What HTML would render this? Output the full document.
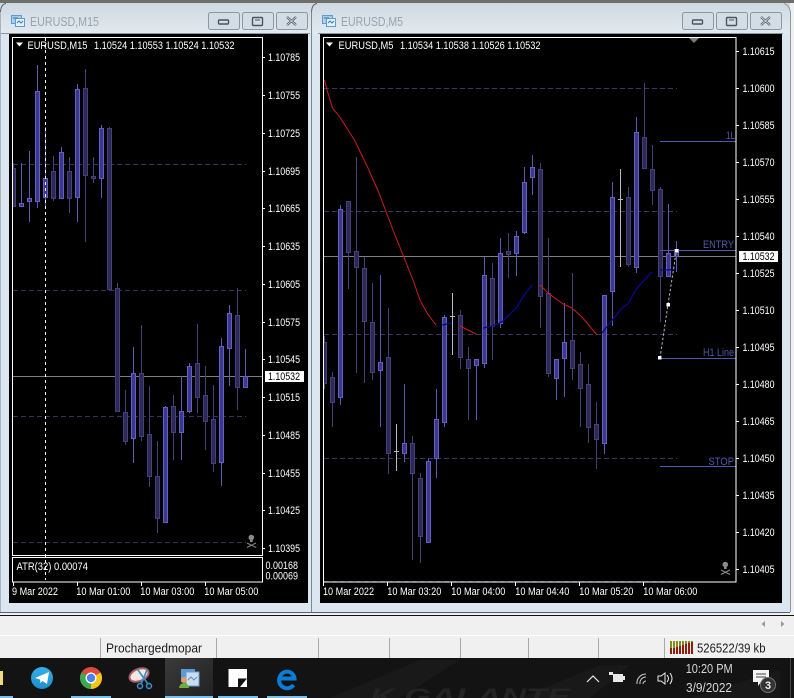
<!DOCTYPE html>
<html><head><meta charset="utf-8"><title>EURUSD</title>
<style>
html,body{margin:0;padding:0;background:#f0f0f0}
svg{display:block}
text{font-family:"Liberation Sans",sans-serif;font-size:10.8px;fill:#fff}
.t{font-size:13px;fill:#98a3ad}
.l{fill:#4f58a8;font-size:11px}
.s{font-size:13px;fill:#1c1c1c}
.c{font-size:13px;fill:#d8d8d8}
.g{stroke:#39345f;stroke-width:1;stroke-dasharray:5 3;fill:none}
.bw{stroke:#5f58b5;stroke-width:1;fill:none}
.bb{fill:#3b3690;stroke:#6660bd;stroke-width:1}
.dw{stroke:#45416e;stroke-width:1;fill:none}
.db{fill:#2c2958;stroke:#45407a;stroke-width:1}
.dj{stroke:#bdbac8;stroke-width:1;fill:none}
.w{stroke:#fff;stroke-width:1;fill:none}
.btn{fill:#d3dde6;stroke:#8b98a4;stroke-width:1}
.ic{fill:none;stroke:#4a5560;stroke-width:1.4}
</style></head>
<body>
<svg width="794" height="698" viewBox="0 0 794 698" xmlns="http://www.w3.org/2000/svg">
<defs>
<linearGradient id="tb" x1="0" y1="0" x2="0" y2="1"><stop offset="0" stop-color="#cfd9e2"/><stop offset="1" stop-color="#e2eaf0"/></linearGradient>
<linearGradient id="tg" x1="0" y1="0" x2="0" y2="1"><stop offset="0" stop-color="#35aee6"/><stop offset="1" stop-color="#1d8fca"/></linearGradient>
<linearGradient id="hl" x1="0" y1="0" x2="1" y2="1"><stop offset="0" stop-color="#3a3a3a"/><stop offset="1" stop-color="#222"/></linearGradient>
<clipPath id="lc"><rect x="13" y="38" width="249" height="517"/></clipPath>
<clipPath id="rc"><rect x="324" y="38" width="412" height="544"/></clipPath>
</defs>

<!-- frame background -->
<rect width="794" height="698" fill="#f0f0f0"/>
<rect x="0" y="0" width="794" height="3" fill="#6e6e6e"/>
<rect x="0" y="3" width="794" height="611" fill="#dbe6f0"/>
<rect x="0" y="3" width="311" height="31" fill="url(#tb)"/>
<rect x="311" y="3" width="479" height="31" fill="url(#tb)"/>
<rect x="790" y="3" width="4" height="611" fill="#f0f0f0"/>
<path d="M0.5 12Q1 4 6 3.5M311.5 12Q312 4 317 3.5" fill="none" stroke="#59636c"/>
<path d="M784 3.5Q789 5 790.5 12V612" fill="none" stroke="#8f9aa3"/>
<path d="M0 33.5H310M318 33.5H783" stroke="#8c969f"/>
<path d="M311.5 12V612" stroke="#7b868f"/>
<path d="M0.5 12V612" stroke="#a9b4bd"/>
<path d="M0 612.5H790" stroke="#55606a"/>
<rect x="0" y="613" width="794" height="1" fill="#f0f0f0"/>
<rect x="0" y="615" width="794" height="1" fill="#111"/>

<!-- left title -->
<g>
<rect x="11.5" y="15.5" width="10" height="8" fill="#a9cdec" stroke="#5f9bcf"/>
<rect x="15.5" y="18.5" width="9" height="8" fill="#e4f0fa" stroke="#5f9bcf"/>
<path d="M13 18h5M17 23l2-2 2 2 2-2" stroke="#3f78aa" fill="none"/>
<text class="t" x="30" y="26" textLength="69" lengthAdjust="spacingAndGlyphs">EURUSD,M15</text>
<rect class="btn" x="208.5" y="12.5" width="31" height="17" rx="2"/>
<rect class="btn" x="242.5" y="12.5" width="31" height="17" rx="2"/>
<rect class="btn" x="276.5" y="12.5" width="31" height="17" rx="2"/>
<rect class="ic" x="218.5" y="20" width="10" height="4" rx="1"/>
<rect class="ic" x="252.5" y="17.5" width="10" height="8" rx="1"/>
<path d="M255 20h5" stroke="#4a5560"/>
<path d="M287 17l9 8M296 17l-9 8" stroke="#4a5560" stroke-width="2.2" fill="none"/>
<path d="M287 17l9 8M296 17l-9 8" stroke="#eef2f5" stroke-width=".7" fill="none"/>
</g>
<!-- right title -->
<g>
<rect x="322.5" y="15.5" width="10" height="8" fill="#a9cdec" stroke="#5f9bcf"/>
<rect x="326.5" y="18.5" width="9" height="8" fill="#e4f0fa" stroke="#5f9bcf"/>
<path d="M324 18h5M328 23l2-2 2 2 2-2" stroke="#3f78aa" fill="none"/>
<text class="t" x="341" y="26" textLength="62" lengthAdjust="spacingAndGlyphs">EURUSD,M5</text>
<rect class="btn" x="682.5" y="12.5" width="31" height="17" rx="2"/>
<rect class="btn" x="716.5" y="12.5" width="31" height="17" rx="2"/>
<rect class="btn" x="750.5" y="12.5" width="31" height="17" rx="2"/>
<rect class="ic" x="692.5" y="20" width="10" height="4" rx="1"/>
<rect class="ic" x="726.5" y="17.5" width="10" height="8" rx="1"/>
<path d="M729 20h5" stroke="#4a5560"/>
<path d="M761 17l9 8M770 17l-9 8" stroke="#4a5560" stroke-width="2.2" fill="none"/>
<path d="M761 17l9 8M770 17l-9 8" stroke="#eef2f5" stroke-width=".7" fill="none"/>
</g>

<!-- charts bg -->
<rect x="9" y="34" width="299" height="569" fill="#000"/>
<rect x="320" y="34" width="462" height="569" fill="#000"/>

<!-- LEFT CHART -->
<g clip-path="url(#lc)">
<path class="g" d="M13 164.5H246M13 290.5H246M13 416.5H246M13 542.5H246"/>
<path d="M13 376.5H262" stroke="#7f7f7f"/>
<path class="dw" d="M13.5 163V207M53.5 156V201M69.5 157V213M85.5 69V242M93.5 157V183M109.5 127V290M117.5 283V412M125.5 390V445M141.5 325V441M149.5 386V487M157.5 441V533M173.5 395V460M197.5 324V413M205.5 366V450M213.5 385V472M237.5 288V410"/>
<path class="db" d="M11.5 168.5h4v38h-4zM51.5 171.5h4v27h-4zM67.5 171.5h4v27h-4zM83.5 88.5h4v87h-4zM91.5 176.5h4v2h-4zM107.5 128.5h4v161h-4zM115.5 288.5h4v123h-4zM123.5 412.5h4v29h-4zM139.5 373.5h4v63h-4zM147.5 434.5h4v42h-4zM155.5 476.5h4v42h-4zM171.5 406.5h4v26h-4zM195.5 363.5h4v34h-4zM203.5 395.5h4v26h-4zM211.5 419.5h4v44h-4zM235.5 315.5h4v72h-4z"/>
<path class="bw" d="M21.5 163V207M29.5 151V222M37.5 65V208M45.5 127V209M61.5 147V198M77.5 84V222M101.5 125V198M133.5 347V463M165.5 406V523M181.5 376V460M189.5 363V413M221.5 338V486M229.5 305V386M245.5 349V387"/>
<path class="bb" d="M19.5 203.5h4v3h-4zM27.5 198.5h4v3h-4zM35.5 91.5h4v110h-4zM43.5 178.5h4v19h-4zM59.5 152.5h4v46h-4zM75.5 89.5h4v108h-4zM99.5 128.5h4v50h-4zM131.5 373.5h4v65h-4zM163.5 407.5h4v115h-4zM179.5 411.5h4v21h-4zM187.5 366.5h4v45h-4zM219.5 346.5h4v116h-4zM227.5 313.5h4v35h-4zM243.5 376.5h4v11h-4z"/>
</g>
<path d="M45.5 38V580" stroke="#fff" stroke-dasharray="3 3"/>
<rect class="w" x="12.5" y="37.5" width="250" height="518"/>
<rect class="w" x="12.5" y="557.5" width="250" height="24.5"/>
<path d="M16 42.5h7l-3.500 4z" fill="#fff"/>
<text x="27.500" y="49" textLength="60" lengthAdjust="spacingAndGlyphs">EURUSD,M15</text>
<text x="94" y="49" textLength="140.500" lengthAdjust="spacingAndGlyphs">1.10524 1.10553 1.10524 1.10532</text>
<path class="w" d="M262 57.500h3M262 95.500h3M262 133.500h3M262 171.500h3M262 208.500h3M262 246.500h3M262 284.500h3M262 322.500h3M262 359.500h3M262 397.500h3M262 435.500h3M262 473.500h3M262 510.500h3M262 548.500h3"/>
<g>
<text x="268" y="61" textLength="32" lengthAdjust="spacingAndGlyphs">1.10785</text>
<text x="268" y="99" textLength="32" lengthAdjust="spacingAndGlyphs">1.10755</text>
<text x="268" y="137" textLength="32" lengthAdjust="spacingAndGlyphs">1.10725</text>
<text x="268" y="175" textLength="32" lengthAdjust="spacingAndGlyphs">1.10695</text>
<text x="268" y="212" textLength="32" lengthAdjust="spacingAndGlyphs">1.10665</text>
<text x="268" y="250" textLength="32" lengthAdjust="spacingAndGlyphs">1.10635</text>
<text x="268" y="288" textLength="32" lengthAdjust="spacingAndGlyphs">1.10605</text>
<text x="268" y="326" textLength="32" lengthAdjust="spacingAndGlyphs">1.10575</text>
<text x="268" y="363" textLength="32" lengthAdjust="spacingAndGlyphs">1.10545</text>
<text x="268" y="401" textLength="32" lengthAdjust="spacingAndGlyphs">1.10515</text>
<text x="268" y="439" textLength="32" lengthAdjust="spacingAndGlyphs">1.10485</text>
<text x="268" y="477" textLength="32" lengthAdjust="spacingAndGlyphs">1.10455</text>
<text x="268" y="514" textLength="32" lengthAdjust="spacingAndGlyphs">1.10425</text>
<text x="268" y="552" textLength="32" lengthAdjust="spacingAndGlyphs">1.10395</text>
</g>
<rect x="265" y="371" width="39" height="11" fill="#fff"/>
<text x="268" y="380" textLength="32" lengthAdjust="spacingAndGlyphs" style="fill:#000">1.10532</text>
<text x="16.500" y="570" textLength="71.500" lengthAdjust="spacingAndGlyphs">ATR(32) 0.00074</text>
<text x="265.500" y="569" textLength="32.500" lengthAdjust="spacingAndGlyphs">0.00168</text>
<text x="265.500" y="579.500" textLength="32.500" lengthAdjust="spacingAndGlyphs">0.00069</text>
<path class="w" d="M13.500 582v4M77.500 582v4M141.500 582v4M205.500 582v4"/>
<text x="12" y="595" textLength="46" lengthAdjust="spacingAndGlyphs">9 Mar 2022</text>
<text x="76.300" y="595" textLength="54" lengthAdjust="spacingAndGlyphs">10 Mar 01:00</text>
<text x="140.300" y="595" textLength="54" lengthAdjust="spacingAndGlyphs">10 Mar 03:00</text>
<text x="204.300" y="595" textLength="54" lengthAdjust="spacingAndGlyphs">10 Mar 05:00</text>
<!-- skull left -->
<g fill="#8a8a8a" stroke="#8a8a8a">
<circle cx="251.300" cy="537.500" r="2.800" stroke="none"/>
<rect x="250" y="539" width="2.600" height="3" stroke="none"/>
<path d="M247 543l9 4.500M256 543l-9 4.500" fill="none"/>
</g>

<!-- RIGHT CHART -->
<g clip-path="url(#rc)">
<path class="g" d="M324 88.500H677M324 211.500H677M324 334.500H677M324 458.500H677M324 581.500H677"/>
<path d="M324 256.500H736" stroke="#7f7f7f"/>
<path class="dw" d="M324.500 336V389M332.500 372V427M348.500 201V289M356.500 157V373M364.500 257V383M372.500 283V380M388.500 308V474M412.500 436V560M420.500 473V563M460.500 310V369M468.500 347V420M492.500 263V360M508.500 233V278M540.500 163V328M548.500 238V377M572.500 273V380M580.500 352V427M588.500 364V443M596.500 402V469M628.500 187V267M644.500 83V168M652.500 145V205M660.500 187V322"/>
<path class="db" d="M322.500 342.500h4v41h-4zM330.500 377.500h4v25h-4zM346.500 201.500h4v51h-4zM354.500 251.500h4v16h-4zM362.500 268.500h4v53h-4zM370.500 322.500h4v50h-4zM386.500 357.500h4v96h-4zM410.500 443.500h4v30h-4zM418.500 478.500h4v58h-4zM458.500 315.500h4v42h-4zM466.500 359.500h4v9h-4zM490.500 278.500h4v48h-4zM506.500 251.500h4v3h-4zM538.500 169.500h4v127h-4zM546.500 293.500h4v80h-4zM570.500 340.500h4v28h-4zM578.500 364.500h4v24h-4zM586.500 384.500h4v43h-4zM594.500 424.500h4v15h-4zM626.500 197.500h4v67h-4zM642.500 137.500h4v31h-4zM650.500 169.500h4v21h-4zM658.500 189.500h4v87h-4z"/>
<path class="bw" d="M340.500 205V405M380.500 275V427M404.500 384V462M428.500 458V543M436.500 389V478M444.500 315V427M476.500 359V420M484.500 257V368M500.500 238V328M516.500 231V276M524.500 167V234M532.500 155V195M556.500 359V400M564.500 303V397M604.500 295V454M612.500 182V326M636.500 117V273M668.500 204V276M676.500 241V272"/>
<path class="bb" d="M338.500 209.500h4v188h-4zM378.500 362.500h4v8h-4zM402.500 443.500h4v10h-4zM426.500 461.500h4v81h-4zM434.500 419.500h4v39h-4zM442.500 317.500h4v105h-4zM474.500 359.500h4v6h-4zM482.500 275.500h4v88h-4zM498.500 253.500h4v70h-4zM514.500 236.500h4v17h-4zM522.500 182.500h4v50h-4zM530.500 167.500h4v10h-4zM554.500 359.500h4v19h-4zM562.500 342.500h4v16h-4zM602.500 295.500h4v148h-4zM610.500 197.500h4v94h-4zM634.500 132.500h4v135h-4zM666.500 253.500h4v23h-4zM674.500 249.500h4v7h-4z"/>
<path class="dj" d="M396.500 424V471M394 451.500h5M452.500 293V355M450 316.500h5M620.500 169V267M618 199.500h5"/>
<!-- MA -->
<path d="M324.500 80L327 90L332.500 108L340.500 118L355 141L368 168L379 193L393 230L403 255L413 280L420 300L427 313L436 325M460 326L476 334M540 285L548 293L563 304L572 308L582 317L597 335" fill="none" stroke="#cc1c1c" stroke-width="1"/>
<path d="M442 325L452 323M483 328L493 326L502 322L517 307L523 297L532 285M602 333L613 319L622 308L628 304L637 288L652 272M660 270L668 270L675 269" fill="none" stroke="#08088e" stroke-width="1.300"/>
<!-- lines -->
<path d="M660 141.500H736M660 250.500H736M660 358.500H736M660 466.500H736" stroke="#4f58b0"/>
<path d="M660 358L668 304.500L676.500 250" stroke="#b4b4c6" stroke-dasharray="2.500 2" fill="none"/>
<rect x="658" y="356" width="3.500" height="3.500" fill="#fff"/>
<rect x="666.500" y="303" width="3.500" height="3.500" fill="#fff"/>
<rect x="675" y="249" width="3.500" height="3.500" fill="#fff"/>
<path d="M689 38h10l-5 5z" fill="#7a7a7a"/>
</g>
<rect class="w" x="323.500" y="37.500" width="412.500" height="544.500"/>
<path d="M326 42.500h7l-3.500 4z" fill="#fff"/>
<text x="338.500" y="49" textLength="55" lengthAdjust="spacingAndGlyphs">EURUSD,M5</text>
<text x="400" y="49" textLength="140.500" lengthAdjust="spacingAndGlyphs">1.10534 1.10538 1.10526 1.10532</text>
<text class="l" x="726" y="139" textLength="9" lengthAdjust="spacingAndGlyphs">1L</text>
<text class="l" x="703" y="248" textLength="31" lengthAdjust="spacingAndGlyphs">ENTRY</text>
<text class="l" x="703" y="356" textLength="31" lengthAdjust="spacingAndGlyphs">H1 Line</text>
<text class="l" x="708.500" y="465" textLength="25.500" lengthAdjust="spacingAndGlyphs">STOP</text>
<path class="w" d="M736 51.500h3M736 88.500h3M736 125.500h3M736 162.500h3M736 199.500h3M736 236.500h3M736 273.500h3M736 310.500h3M736 347.500h3M736 384.500h3M736 421.500h3M736 458.500h3M736 495.500h3M736 532.500h3M736 569.500h3"/>
<g>
<text x="742.500" y="55" textLength="32" lengthAdjust="spacingAndGlyphs">1.10615</text>
<text x="742.500" y="92" textLength="32" lengthAdjust="spacingAndGlyphs">1.10600</text>
<text x="742.500" y="129" textLength="32" lengthAdjust="spacingAndGlyphs">1.10585</text>
<text x="742.500" y="166" textLength="32" lengthAdjust="spacingAndGlyphs">1.10570</text>
<text x="742.500" y="203" textLength="32" lengthAdjust="spacingAndGlyphs">1.10555</text>
<text x="742.500" y="240" textLength="32" lengthAdjust="spacingAndGlyphs">1.10540</text>
<text x="742.500" y="277" textLength="32" lengthAdjust="spacingAndGlyphs">1.10525</text>
<text x="742.500" y="314" textLength="32" lengthAdjust="spacingAndGlyphs">1.10510</text>
<text x="742.500" y="351" textLength="32" lengthAdjust="spacingAndGlyphs">1.10495</text>
<text x="742.500" y="388" textLength="32" lengthAdjust="spacingAndGlyphs">1.10480</text>
<text x="742.500" y="425" textLength="32" lengthAdjust="spacingAndGlyphs">1.10465</text>
<text x="742.500" y="462" textLength="32" lengthAdjust="spacingAndGlyphs">1.10450</text>
<text x="742.500" y="499" textLength="32" lengthAdjust="spacingAndGlyphs">1.10435</text>
<text x="742.500" y="536" textLength="32" lengthAdjust="spacingAndGlyphs">1.10420</text>
<text x="742.500" y="573" textLength="32" lengthAdjust="spacingAndGlyphs">1.10405</text>
</g>
<rect x="739" y="251" width="39" height="11" fill="#fff"/>
<text x="742.500" y="260" textLength="32" lengthAdjust="spacingAndGlyphs" style="fill:#000">1.10532</text>
<path class="w" d="M323.500 582v4M387.500 582v4M451.500 582v4M515.500 582v4M579.500 582v4M643.500 582v4"/>
<text x="323" y="595" textLength="51" lengthAdjust="spacingAndGlyphs">10 Mar 2022</text>
<text x="387.300" y="595" textLength="54" lengthAdjust="spacingAndGlyphs">10 Mar 03:20</text>
<text x="451.300" y="595" textLength="54" lengthAdjust="spacingAndGlyphs">10 Mar 04:00</text>
<text x="515.300" y="595" textLength="54" lengthAdjust="spacingAndGlyphs">10 Mar 04:40</text>
<text x="579.300" y="595" textLength="54" lengthAdjust="spacingAndGlyphs">10 Mar 05:20</text>
<text x="643.300" y="595" textLength="54" lengthAdjust="spacingAndGlyphs">10 Mar 06:00</text>
<!-- skull right -->
<g fill="#8a8a8a" stroke="#8a8a8a">
<circle cx="725.300" cy="564.500" r="2.800" stroke="none"/>
<rect x="724" y="566" width="2.600" height="3" stroke="none"/>
<path d="M721 570l9 4.500M730 570l-9 4.500" fill="none"/>
</g>

<!-- toolbar strip -->
<path d="M765 621v6l-3.500-3zM781 621v6l3.500-3z" fill="#9a9a9a"/>
<path d="M0 635.500H794" stroke="#fdfdfd"/>
<path d="M100.500 638V658M216.500 638V658M318.500 638V658M389.500 638V658M460.500 638V658M528.500 638V658M598.500 638V658M664.500 638V658" stroke="#a8a8a8"/>
<text class="s" x="106" y="652.500" textLength="96" lengthAdjust="spacingAndGlyphs">Prochargedmopar</text>
<!-- connection bars -->
<g stroke-width="2" fill="none">
<path d="M671 641V648M674 641V648M677 641V647M680 641V646M683 641V645M686 641V644M689 641V643M692 641V642" stroke="#7f8f1a"/>
<path d="M671 648V654M674 648V654M677 647V654M680 646V654M683 645V654M686 644V654M689 643V654M692 642V654" stroke="#8e1d10"/>
</g>
<text class="s" x="697" y="652.500" textLength="68.500" lengthAdjust="spacingAndGlyphs">526522/39 kb</text>

<!-- TASKBAR -->
<rect x="0" y="658" width="794" height="40" fill="#131313"/>
<rect x="165" y="658" width="48" height="40" fill="url(#hl)"/>
<path d="M330 698L420 660H460L400 698zM520 698L600 665H630L590 698zM690 698L780 670V698z" fill="#191919"/>
<text x="370" y="704" style="font-size:22px;font-style:italic;font-weight:bold;fill:#242424" textLength="200" lengthAdjust="spacingAndGlyphs">K GALANTE</text>
<path d="M790.500 658V698" stroke="#444"/>
<rect x="0" y="671" width="3" height="14" fill="#f0d97a"/>
<path d="M0 697H13M71 697H111M165 697H213M218 697H258M267 697H307" stroke="#7cc0ea" stroke-width="2"/>
<!-- telegram -->
<circle cx="42" cy="678" r="11" fill="url(#tg)"/>
<path d="M35 678L49 672L47 684L42.500 681L40.500 683L40 679.500z" fill="#fff"/>
<!-- chrome -->
<circle cx="91" cy="678" r="11" fill="#dd4b3e"/>
<path d="M91 678L100.500 672.500A11 11 0 0 1 91 689z" fill="#f5c518"/>
<path d="M91 678L91 689A11 11 0 0 1 81.500 672.500z" fill="#3da853"/>
<circle cx="91" cy="678" r="5.500" fill="#fff"/>
<circle cx="91" cy="678" r="4.200" fill="#4a85ee"/>
<!-- snip -->
<ellipse cx="139" cy="675" rx="10" ry="6" fill="#f2e7e7" stroke="#a86068" stroke-width="2" transform="rotate(-22 139 675)"/>
<path d="M138 670L148 684M147 670L141 684" stroke="#3b8fc9" stroke-width="1.600" fill="none"/>
<circle cx="149" cy="686" r="2.500" fill="none" stroke="#3b8fc9" stroke-width="1.500"/>
<circle cx="140" cy="686" r="2.500" fill="none" stroke="#3b8fc9" stroke-width="1.500"/>
<!-- mt4 -->
<rect x="181" y="669" width="14" height="13" fill="#5c9ad6"/>
<rect x="186" y="672" width="13" height="14" fill="#c9def2" stroke="#6d9fcf"/>
<path d="M188 680l3-3 3 3 3-3" stroke="#5b8fc2" fill="none"/>
<circle cx="184" cy="680" r="3" fill="#e59a6a"/>
<path d="M179 688a5 5 0 0 1 10 0z" fill="#6fae3f"/>
<!-- square -->
<rect x="228.500" y="669" width="18.500" height="18" fill="#fff"/>
<path d="M238 678.500H247L240 687H238z" fill="#111"/>
<!-- edge -->
<path d="M280 678.500H294.500A7.500 7.500 0 0 0 280 676.500A8 8 0 0 0 293.500 685" fill="none" stroke="#0c7cd5" stroke-width="4"/>
<!-- tray -->
<path d="M587 682l6-6 6 6" stroke="#e8e8e8" stroke-width="1.200" fill="none"/>
<rect x="613" y="674" width="10" height="8" fill="#e8e8e8"/>
<path d="M609 672h4v3h-4zM623 676h2v4h-2z" fill="#e8e8e8"/>
<path d="M637 684a9 9 0 0 1 9-10M640 684a6 6 0 0 1 6-7M643 684a3 3 0 0 1 3-3" stroke="#cfcfcf" fill="none" stroke-width="1"/>
<path d="M658 676h3l4-3v11l-4-3h-3z" fill="none" stroke="#e8e8e8"/>
<path d="M667 675q3 3.500 0 7M670 673q4 5.500 0 11" fill="none" stroke="#e8e8e8"/>
<text class="c" x="685.700" y="673" textLength="47" lengthAdjust="spacingAndGlyphs">10:20 PM</text>
<text class="c" x="686" y="692" textLength="46" lengthAdjust="spacingAndGlyphs">3/9/2022</text>
<path d="M753 670H769V682H761L758 686V682H753z" fill="#f4f4f4"/>
<path d="M756 674H766M756 677H766" stroke="#444"/>
<circle cx="768" cy="685" r="7.500" fill="#333" stroke="#777"/>
<text x="765" y="689" style="font-size:11px;font-weight:bold;fill:#eee">3</text>
</svg>
</body></html>
